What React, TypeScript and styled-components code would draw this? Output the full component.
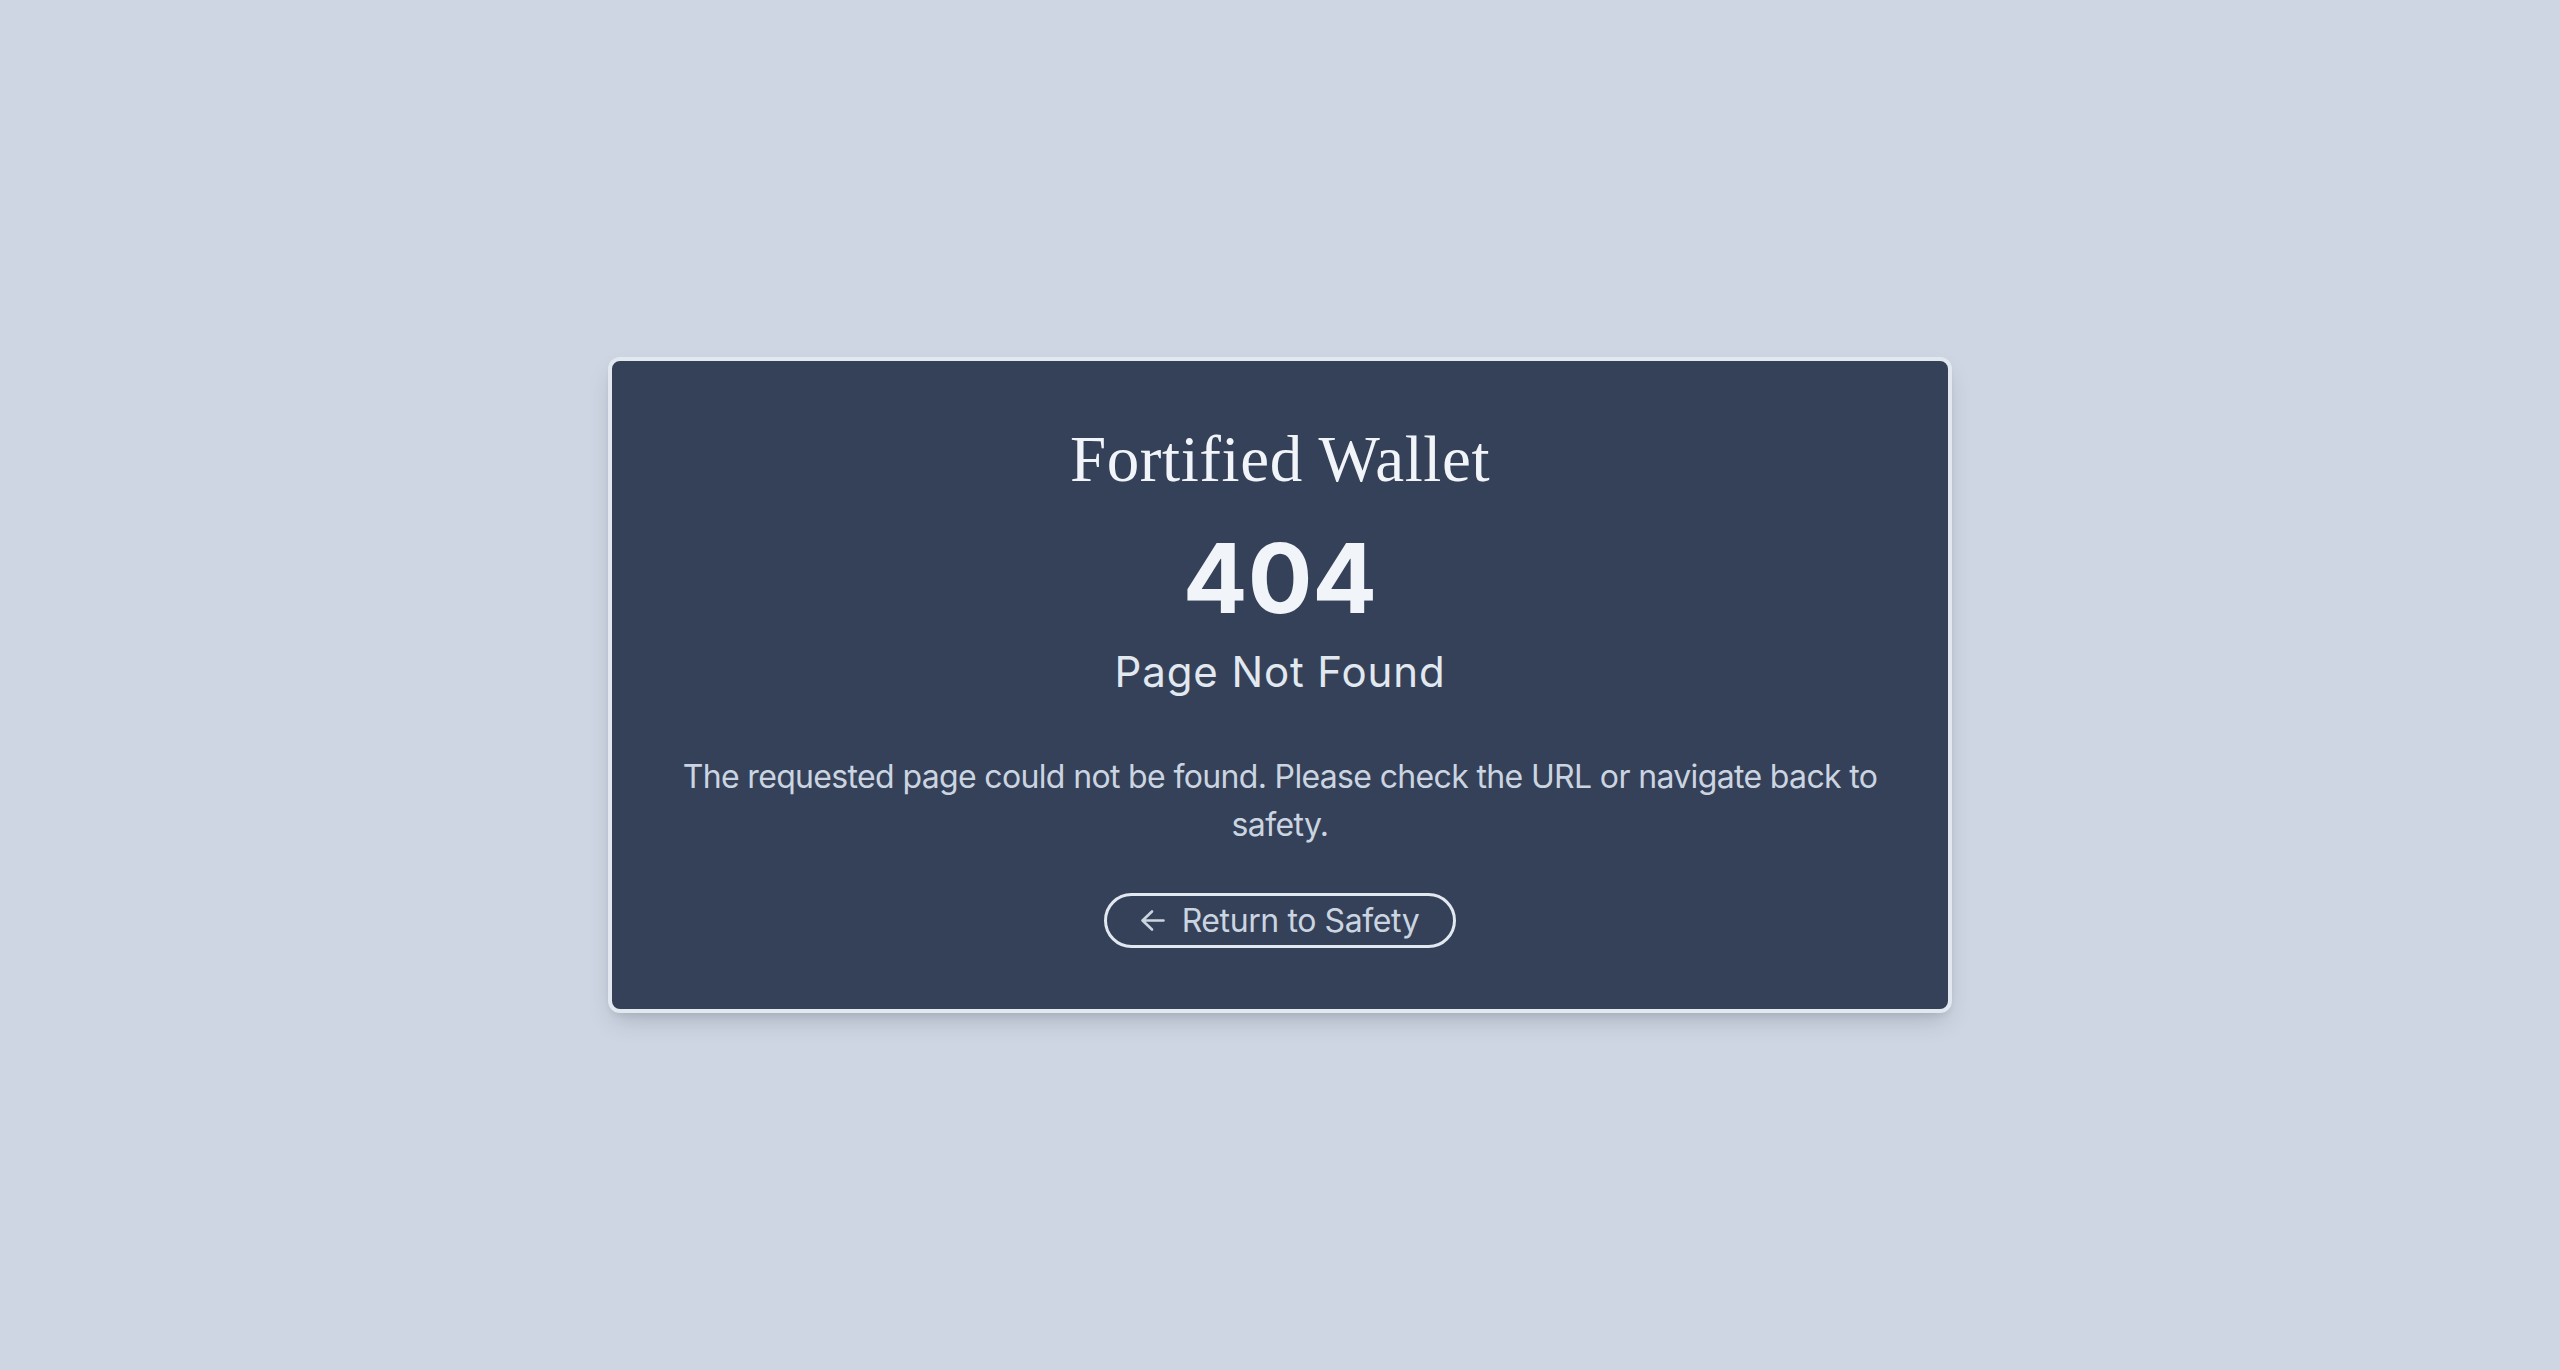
import React from "react";
import styled, { createGlobalStyle } from "styled-components";

const GlobalStyle = createGlobalStyle`
  html, body {
    margin: 0;
    padding: 0;
    background: #cfd6e3;
  }
  body {
    font-family: Inter, "Noto Sans", "Liberation Sans", sans-serif;
  }
  * { box-sizing: border-box; }
`;

const Page = styled.main`
  min-height: 100vh;
  display: flex;
  align-items: center;
  justify-content: center;
  background: #cfd6e3;
`;

const Card = styled.section`
  width: 1344px;
  background: #354158;
  border: 4px solid #e2e8f0;
  border-radius: 12px;
  box-shadow: 0 12px 24px -6px rgba(30, 41, 59, 0.22), 0 4px 8px -4px rgba(30, 41, 59, 0.12);
  padding: 60px 64px 61px;
  display: flex;
  flex-direction: column;
  align-items: center;
  text-align: center;
`;

const Brand = styled.h1`
  margin: 0;
  font-family: "Liberation Serif", "DejaVu Serif", serif;
  font-weight: 400;
  font-size: 65px;
  line-height: 77px;
  letter-spacing: 0.6px;
  color: #f1f5f9;
`;

const Code = styled.div`
  margin-top: 32px;
  font-family: Inter, "Liberation Sans", sans-serif;
  font-weight: 700;
  font-size: 96px;
  line-height: 96px;
  color: #f1f5f9;
`;

const Heading = styled.h2`
  margin: 22px 0 0;
  font-family: Inter, "Liberation Sans", sans-serif;
  font-weight: 400;
  font-size: 42px;
  line-height: 48px;
  letter-spacing: 0.9px;
  color: #e2e8f0;
`;

const Message = styled.p`
  margin: 57px 0 0;
  font-family: Inter, "Liberation Sans", sans-serif;
  font-size: 32px;
  line-height: 48px;
  letter-spacing: -0.65px;
  color: #cbd5e1;
`;

const ReturnButton = styled.a`
  margin-top: 44px;
  height: 55px;
  display: inline-flex;
  align-items: center;
  gap: 16px;
  padding: 0 34px 0 33px;
  border: 3px solid #e2e8f0;
  border-radius: 9999px;
  color: #cbd5e1;
  font-family: Inter, "Liberation Sans", sans-serif;
  font-size: 32px;
  line-height: 1;
  letter-spacing: -0.4px;
  text-decoration: none;
  cursor: pointer;
`;

const Arrow = () => (
  <svg width="26" height="23" viewBox="0 0 26 23" fill="none" aria-hidden="true">
    <path
      d="M12 2.5 L2.5 11.5 L12 20.5 M2.5 11.5 H23.5"
      stroke="#cbd5e1"
      strokeWidth="2.6"
      strokeLinecap="round"
      strokeLinejoin="round"
    />
  </svg>
);

export default function App() {
  return (
    <>
      <GlobalStyle />
      <Page>
        <Card>
          <Brand>Fortified Wallet</Brand>
          <Code>404</Code>
          <Heading>Page Not Found</Heading>
          <Message>
            The requested page could not be found. Please check the URL or navigate back to safety.
          </Message>
          <ReturnButton href="#">
            <Arrow />
            <span>Return to Safety</span>
          </ReturnButton>
        </Card>
      </Page>
    </>
  );
}
